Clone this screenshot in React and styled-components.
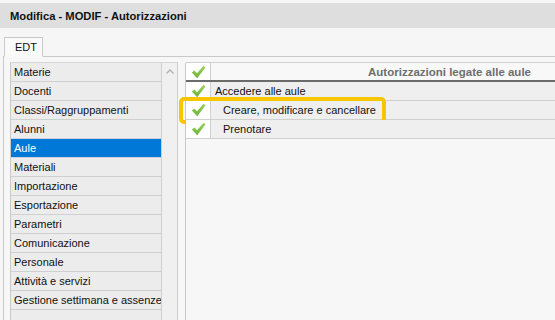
import React from "react";
import styled, { createGlobalStyle } from "styled-components";

const Global = createGlobalStyle`
  html, body { margin: 0; padding: 0; overflow: hidden; }
  body {
    background: #f6f6f6;
    font-family: "Liberation Sans", Arial, sans-serif;
    font-size: 11px;
    color: #000;
  }
`;

const Window = styled.div`
  width: 555px;
  height: 320px;
  overflow: hidden;
  display: flex;
  flex-direction: column;
  background: #f6f6f6;
`;

const TitleBar = styled.div`
  margin-top: 3px;
  height: 25px;
  flex: none;
  display: flex;
  align-items: center;
  padding-left: 10px;
  background: #dedede;
  font-weight: bold;
  font-size: 11.2px;
  color: #111;
`;

const TabStrip = styled.div`
  height: 28px;
  flex: none;
  display: flex;
  align-items: flex-end;
  padding-left: 4px;
  position: relative;
  z-index: 1;
`;

const Tab = styled.div`
  width: 39px;
  height: 20px;
  margin-bottom: -1px;
  border: 1px solid #c9c9c9;
  border-bottom: 1px solid #fafafa;
  background: #fafafa;
  display: flex;
  align-items: center;
  padding-left: 10px;
  box-sizing: border-box;
  font-size: 11px;
  color: #111;
`;

const Panel = styled.div`
  flex: 1;
  margin-left: 3px;
  border-top: 1px solid #c9c9c9;
  border-left: 1px solid #c9c9c9;
  padding: 6px 0 0 6px;
  display: flex;
  min-height: 0;
  background: #f7f7f7;
`;

const ListBox = styled.div`
  display: flex;
  flex: none;
  border-left: 1px solid #c9c9c9;
  border-top: 1px solid #d6d6d6;
  margin-top: -1px;
`;

const List = styled.div`
  width: 150px;
  display: flex;
  flex-direction: column;
`;

const ListItem = styled.div`
  height: 18px;
  flex: none;
  border-bottom: 1px solid #d0d0d0;
  display: flex;
  align-items: center;
  padding-left: 3px;
  white-space: nowrap;
  overflow: hidden;
  background: ${(p) => (p.$selected ? "#0078d7" : "#ececec")};
  color: ${(p) => (p.$selected ? "#fff" : "#111")};
`;

const ScrollTrack = styled.div`
  width: 17px;
  border-left: 1px solid #cfcfcf;
  border-right: 1px solid #cfcfcf;
  background: #f0f0f0;
  display: flex;
  justify-content: center;
  padding-top: 6px;
  box-sizing: border-box;
`;

const RightPane = styled.div`
  flex: 1;
  margin-left: 7px;
  border-left: 1px solid #c9c9c9;
  display: flex;
  flex-direction: column;
  min-width: 0;
`;

const Row = styled.div`
  position: relative;
  display: flex;
  height: ${(p) => (p.$header ? "17px" : "18px")};
  border-top: ${(p) => (p.$header ? "1px solid #d0d0d0" : "none")};
  border-bottom: ${(p) => (p.$header ? "2px solid #6b6b6b" : "1px solid #d0d0d0")};
  background: ${(p) => (p.$header ? "#f8f8f8" : "#efefef")};
  margin-top: ${(p) => (p.$header ? "-1px" : "0")};
`;

const CheckCell = styled.div`
  width: 24px;
  flex: none;
  border-right: 1px solid #d0d0d0;
  background: #fff;
  display: flex;
  align-items: center;
  justify-content: center;
`;

const LabelCell = styled.div`
  flex: 1;
  display: flex;
  align-items: center;
  padding-left: ${(p) => (p.$indent ? "12px" : "4px")};
  white-space: nowrap;
  color: #111;
`;

const HeaderCell = styled.div`
  flex: 1;
  display: flex;
  align-items: center;
  justify-content: flex-end;
  padding-right: 24px;
  font-weight: bold;
  font-size: 11.5px;
  color: #6e6e6e;
  white-space: nowrap;
`;

const Highlight = styled.div`
  position: absolute;
  left: -7px;
  top: -4px;
  width: 207px;
  height: 27px;
  box-sizing: border-box;
  border: 4px solid #f7c600;
  border-radius: 5px;
  pointer-events: none;
`;

const Check = () => (
  <svg width="15" height="14" viewBox="0 0 15 14">
    <defs>
      <linearGradient id="cg" x1="0" y1="0" x2="0" y2="1">
        <stop offset="0" stopColor="#9bd35a" />
        <stop offset="1" stopColor="#6cb33a" />
      </linearGradient>
    </defs>
    <path
      d="M0.8 7.6 L3.4 5.4 L6 8.2 L12.6 0.8 L14.4 2.4 L6.2 13.2 Z"
      fill="url(#cg)"
    />
  </svg>
);

const UpArrow = () => (
  <svg width="8" height="5" viewBox="0 0 8 5">
    <path d="M0.5 4.5 L4 1 L7.5 4.5" fill="none" stroke="#b0b0b0" strokeWidth="1.3" />
  </svg>
);

const items = [
  "Materie",
  "Docenti",
  "Classi/Raggruppamenti",
  "Alunni",
  "Aule",
  "Materiali",
  "Importazione",
  "Esportazione",
  "Parametri",
  "Comunicazione",
  "Personale",
  "Attività e servizi",
  "Gestione settimana e assenze",
  "",
];

const rows = [
  { label: "Accedere alle aule", indent: false },
  { label: "Creare, modificare e cancellare", indent: true, highlight: true },
  { label: "Prenotare", indent: true },
];

export default function App() {
  return (
    <Window>
      <Global />
      <TitleBar>Modifica - MODIF - Autorizzazioni</TitleBar>
      <TabStrip>
        <Tab>EDT</Tab>
      </TabStrip>
      <Panel>
        <ListBox>
          <List>
            {items.map((it, i) => (
              <ListItem key={i} $selected={it === "Aule"}>
                {it}
              </ListItem>
            ))}
          </List>
          <ScrollTrack>
            <UpArrow />
          </ScrollTrack>
        </ListBox>
        <RightPane>
          <Row $header>
            <CheckCell>
              <Check />
            </CheckCell>
            <HeaderCell>Autorizzazioni legate alle aule</HeaderCell>
          </Row>
          {rows.map((r) => (
            <Row key={r.label}>
              <CheckCell>
                <Check />
              </CheckCell>
              <LabelCell $indent={r.indent}>{r.label}</LabelCell>
              {r.highlight && <Highlight />}
            </Row>
          ))}
        </RightPane>
      </Panel>
    </Window>
  );
}
